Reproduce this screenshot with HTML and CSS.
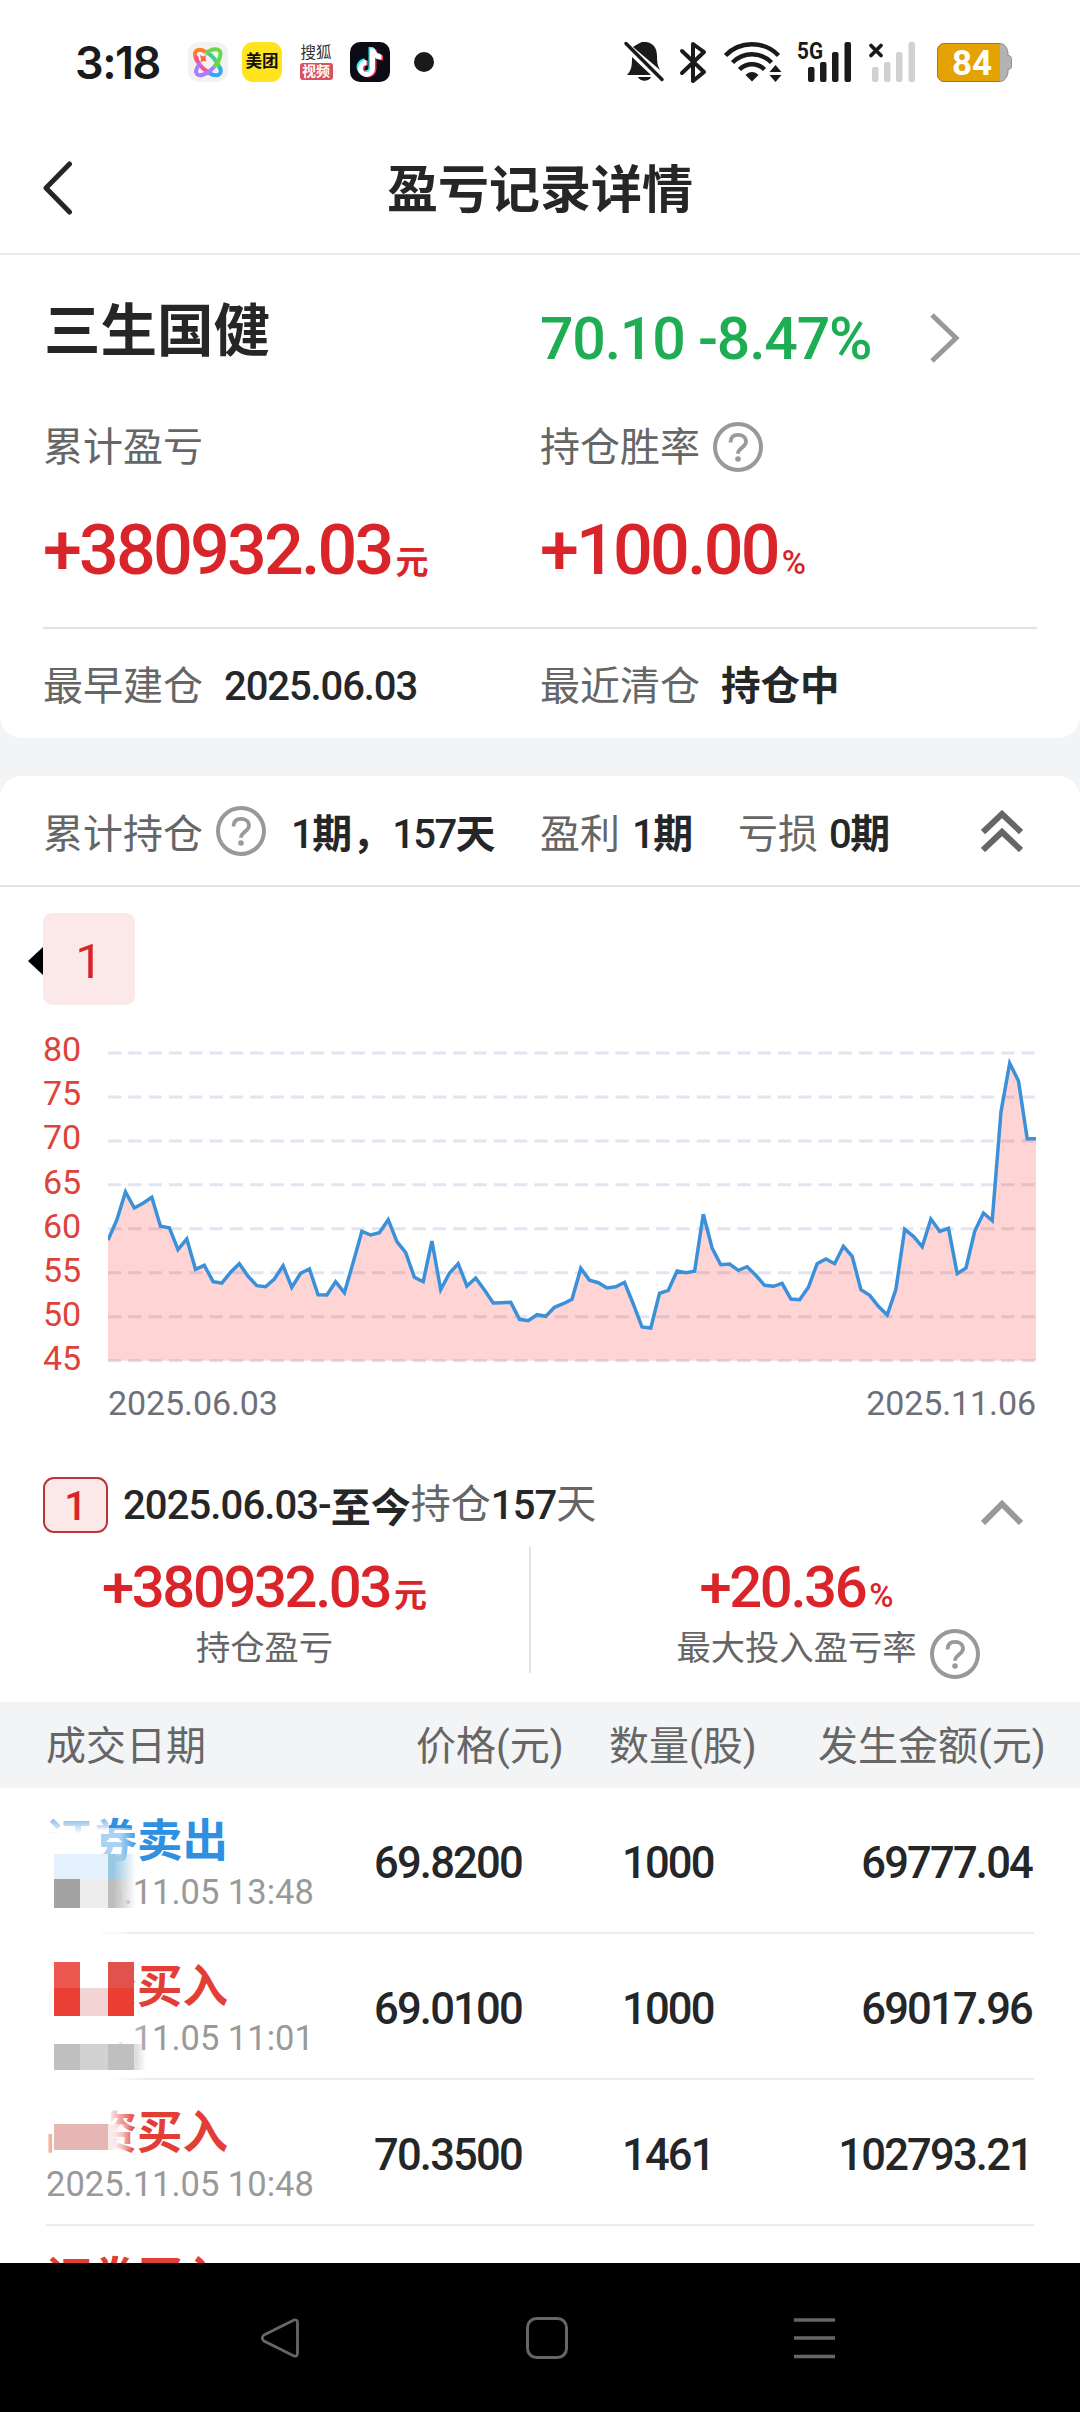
FILE: index.html
```html
<!DOCTYPE html>
<html lang="zh-CN">
<head>
    <meta charset="UTF-8">
    <meta name="viewport" content="width=device-width, initial-scale=1.0">
    <title>盈亏记录详情</title>
    <link rel="stylesheet" href="styles.css">
</head>
<body>
    <!-- 公用图标 -->
    <svg class="defs" width="0" height="0">
        <defs>
            <symbol id="icon-help" viewBox="0 0 50 50">
                <circle cx="25" cy="25" r="23" fill="none" stroke="#999" stroke-width="4"/>
                <path d="M17.5 20.5C17.5 15 20.5 12.8 25 12.8s8 2.600 8 7c0 5.500-8 6-8 12" fill="none" stroke="#999" stroke-width="3.800"/>
                <circle cx="25" cy="37" r="2.800" fill="#999"/>
            </symbol>
            <linearGradient id="fade" x1="0" x2="1" y1="0" y2="0">
                <stop offset="0.650" stop-color="#fff"/>
                <stop offset="1" stop-color="#fff" stop-opacity="0"/>
            </linearGradient>
            <linearGradient id="fade-down" x1="0" x2="0" y1="0" y2="1">
                <stop offset="0" stop-color="#fff" stop-opacity="0.300"/>
                <stop offset="1" stop-color="#fff"/>
            </linearGradient>
            <linearGradient id="fade-blue"><stop offset="0.2" stop-color="#9ac8e2"/><stop offset="1" stop-color="#9ac8e2" stop-opacity="0"/></linearGradient>
            <linearGradient id="fade-gray"><stop offset="0.2" stop-color="#bdbdbd"/><stop offset="1" stop-color="#bdbdbd" stop-opacity="0"/></linearGradient>
            <linearGradient id="fade-pink"><stop offset="0" stop-color="#f9e9e9"/><stop offset="1" stop-color="#fff" stop-opacity="0"/></linearGradient>
        </defs>
    </svg>

    <div class="status-bar">
        <span class="time">3:18</span>
        <div class="apps">
            <svg class="app" viewBox="0 0 40 40">
                <rect width="40" height="40" rx="11" fill="#f2f2f3"/>
                <g fill="none" stroke-width="4">
                    <path d="M9 19C4 9 9 5 18 10" stroke="#ff7a2e"/>
                    <path d="M18 10c7 4 12 11 14 17" stroke="#3fcf8d"/>
                    <path d="M18 11c8-6 17-5 14 4-1 4-3 7-6 10" stroke="#6cd64a"/>
                    <path d="M32 25c3 9-4 10-11 6" stroke="#35a8f5"/>
                    <path d="M22 31C14 27 9 21 8 14" stroke="#f7519a"/>
                    <path d="M26 25c-7 8-17 11-18 5 0-3 2-6 4-9" stroke="#a97bff"/>
                </g>
                <path d="M12 13l3 1.500 3-1.500-.5 3.500 1 3-3-.5-3 1.500.5-3z" fill="#ff6a3c"/>
            </svg>
            <span class="app meituan">美团</span>
            <span class="app sohu"><i>搜狐</i><b>视频</b></span>
            <svg class="app" viewBox="0 0 40 40">
                <rect width="40" height="40" rx="10" fill="#0b0b17"/>
                <g fill="none" stroke-width="5">
                    <path d="M21 5v20a6 6 0 1 1-6-6M21 6c1 5 4 8 9 8" stroke="#25f4ee"/>
                    <path d="M24 8v19a6 6 0 1 1-6-6M24 8c1 5 4 8 9 8" stroke="#fe2c55"/>
                    <path d="M22.500 6.500v20a6 6 0 1 1-6-6M22.500 7c1 5 4 8 9 8" stroke="#fff"/>
                </g>
            </svg>
            <span class="dot"></span>
        </div>
        <svg class="signals" width="395" height="48" viewBox="620 38 395 48">
            <g fill="#1a1a1a">
                <!-- 静音 -->
                <path d="M633 47c3-2 6-4 9-5h4c8 1 11 7 11 14 0 8 1 10 3 14z"/>
                <path d="M632 57l19 18h-24c5-5 5-11 5-18zM638 77h13c-2 5-11 5-13 0z"/>
                <path d="M626 43.500l36 36" stroke="#1a1a1a" stroke-width="3.500" stroke-linecap="round"/>
                <!-- 蓝牙 -->
                <path d="M682 51l22 21-11 9V44l11 8-22 21" fill="none" stroke="#1a1a1a" stroke-width="4" stroke-linejoin="round" stroke-linecap="round"/>
                <!-- wifi -->
                <g fill="none" stroke="#1a1a1a" stroke-width="4.500">
                    <path d="M725.500 55.500c14-15 39-15 53 0"/>
                    <path d="M732.500 62.500c11-11 28-11 39 0"/>
                    <path d="M739.500 69.500c7-7 18-7 25 0"/>
                </g>
                <path d="M745.500 75c4-4 9-4 13 0l-6.500 6.500z"/>
                <path d="M769.500 72l6-7 6 7zM769.500 75h12l-6 7z"/>
                <!-- 卡1 -->
                <rect x="808" y="67" width="6.500" height="15" rx="2"/>
                <rect x="820" y="62" width="6.500" height="20" rx="2"/>
                <rect x="832" y="52" width="6.500" height="30" rx="2"/>
                <rect x="844.500" y="42" width="6.500" height="40" rx="2"/>
                <text x="797" y="58.500" class="net" textLength="26" lengthAdjust="spacingAndGlyphs">5G</text>
                <path d="M871 45.500l10 10M881 45.500l-10 10" stroke="#1a1a1a" stroke-width="3.800" stroke-linecap="round"/>
            </g>
            <!-- 卡2 -->
            <g fill="#d1d1d1">
                <rect x="872" y="67" width="6.500" height="15" rx="2"/>
                <rect x="884" y="62" width="6.500" height="20" rx="2"/>
                <rect x="896" y="52" width="6.500" height="30" rx="2"/>
                <rect x="908.500" y="42" width="6.500" height="40" rx="2"/>
            </g>
            <!-- 电池 -->
            <path d="M945 43.500h54c6 0 8 4 9 9v3c3 0 3.500 2 3.500 4v6c0 2-.5 4-3.500 4v3c-1 5-3 9-9 9h-54c-5 0-7.500-3-7.500-8V51.500c0-5 2.500-8 7.500-8z" fill="#b3b3b3" stroke="#8d8d8d"/>
            <path d="M1000 43.500h-55c-5 0-7.500 3-7.500 8v22c0 5 2.500 8 7.500 8h55z" fill="#e5a203"/>
            <path d="M1000 43.500h-55c-5 0-7.500 3-7.500 8v22c0 5 2.500 8 7.500 8h55" fill="none" stroke="#9b7a2b"/>
            <text x="952" y="74.500" class="level">84</text>
        </svg>
    </div>

    <div class="nav-header">
        <svg class="back" width="30" height="54" viewBox="0 0 30 54">
            <path d="M26.500 3L3 27l23.500 24" fill="none" stroke="#242628" stroke-width="5" stroke-linecap="round" stroke-linejoin="round"/>
        </svg>
        <h1>盈亏记录详情</h1>
    </div>

    <div class="card summary">
        <div class="two-col stock-row">
            <div class="stock-name">三生国健</div>
            <div class="stock-price">
                <span class="num">70.10 -8.47%</span>
                <svg width="30" height="50" viewBox="0 0 30 50"><path d="M2 2l24 23L2 48" fill="none" stroke="#999" stroke-width="5"/></svg>
            </div>
        </div>
        <div class="two-col label-row">
            <div>累计盈亏</div>
            <div class="with-help">持仓胜率<svg class="help"><use href="#icon-help"/></svg></div>
        </div>
        <div class="two-col value-row">
            <div><span class="num">+380932.03</span><small>元</small></div>
            <div><span class="num">+100.00</span><small class="pct">%</small></div>
        </div>
        <div class="two-col date-row">
            <div>最早建仓<span class="num">2025.06.03</span></div>
            <div>最近清仓<b>持仓中</b></div>
        </div>
    </div>

    <div class="card detail">
        <div class="hold-row">
            <span class="g">累计持仓</span>
            <svg class="help"><use href="#icon-help"/></svg>
            <b class="h1"><i>1</i>期，<i>157</i>天</b>
            <span class="g">盈利</span>
            <b class="h2"><i>1</i>期</b>
            <span class="g">亏损</span>
            <b class="h3"><i>0</i>期</b>
            <svg class="fold" width="42" height="42" viewBox="0 0 42 42"><path d="M2 22L21 4l19 18M2 40l19-18 19 18" fill="none" stroke="#666" stroke-width="6"/></svg>
        </div>

        <div class="tabs"><span class="arrow"></span><span class="tab">1</span></div>

        <div class="chart">
            <div class="y-axis">
                <span>80</span><span>75</span><span>70</span><span>65</span>
                <span>60</span><span>55</span><span>50</span><span>45</span>
            </div>
            <div class="plot">
                <svg id="chart" width="928" height="314" viewBox="0 0 928 314"></svg>
                <div class="x-axis"><span>2025.06.03</span><span>2025.11.06</span></div>
            </div>
        </div>

        <div class="period">
            <span class="badge">1</span>
            <span class="num">2025.06.03-</span><b>至今</b><span class="g">持仓</span><span class="num">157</span><span class="g">天</span>
            <svg class="fold" width="42" height="26" viewBox="0 0 42 26"><path d="M2 24L21 5l19 19" fill="none" stroke="#999" stroke-width="6"/></svg>
        </div>

        <div class="stats">
            <div class="stat">
                <div class="stat-value"><span class="num">+380932.03</span><small>元</small></div>
                <div class="stat-label">持仓盈亏</div>
            </div>
            <div class="stat">
                <div class="stat-value"><span class="num">+20.36</span><small class="pct">%</small></div>
                <div class="stat-label">最大投入盈亏率<svg class="help"><use href="#icon-help"/></svg></div>
            </div>
        </div>

        <div class="table-head">
            <span>成交日期</span><span>价格(元)</span><span>数量(股)</span><span>发生金额(元)</span>
        </div>

        <div class="trade">
            <div class="trade-info sell"><p>证券卖出</p><time>2025.11.05 13:48</time></div>
            <span class="num">69.8200</span><span class="num">1000</span><span class="num amount">69777.04</span>
            <svg class="mosaic" width="110" height="146" viewBox="43 0 110 146">
                <rect x="43" y="28" width="66" height="18" fill="url(#fade-down)"/>
                <rect x="43" y="46" width="58" height="100" fill="#fff"/>
                <rect x="85" y="40" width="54" height="104" fill="url(#fade)" opacity="0.600"/>
                <rect x="100" y="80" width="32" height="66" fill="url(#fade)" opacity="0.700"/>
                <rect x="54" y="66" width="54" height="25" fill="#e4f1fc"/>
                <rect x="108" y="66" width="28" height="25" fill="url(#fade-blue)"/>
                <rect x="54" y="91" width="26" height="29" fill="#a2a2a2"/>
                <rect x="80" y="91" width="28" height="29" fill="#ededed"/>
                <rect x="108" y="91" width="28" height="29" fill="url(#fade-gray)"/>
            </svg>
        </div>
        <div class="trade">
            <div class="trade-info buy"><p>融资买入</p><time>2025.11.05 11:01</time></div>
            <span class="num">69.0100</span><span class="num">1000</span><span class="num amount">69017.96</span>
            <svg class="mosaic" width="110" height="146" viewBox="43 0 110 146">
                <rect x="43" y="28" width="88" height="56" fill="#fff"/>
                <rect x="43" y="84" width="106" height="62" fill="url(#fade)"/>
                <rect x="43" y="84" width="92" height="24" fill="#fff"/>
                <rect x="54" y="28" width="26" height="26" fill="#ee5650"/>
                <rect x="108" y="28" width="26" height="26" fill="#e2524d"/>
                <rect x="54" y="54" width="26" height="28" fill="#ea3f35"/>
                <rect x="80" y="54" width="28" height="28" fill="#f2d4d5"/>
                <rect x="108" y="54" width="26" height="28" fill="#ea3e33"/>
                <rect x="54" y="110" width="26" height="26" fill="#bfbfbf"/>
                <rect x="80" y="110" width="28" height="26" fill="#d2d2d2"/>
                <rect x="108" y="110" width="26" height="26" fill="#bfbfbf"/>
                <rect x="134" y="110" width="12" height="26" fill="url(#fade-gray)" opacity="0.500"/>
            </svg>
        </div>
        <div class="trade">
            <div class="trade-info buy"><p>融资买入</p><time>2025.11.05 10:48</time></div>
            <span class="num">70.3500</span><span class="num">1461</span><span class="num amount">102793.21</span>
            <svg class="mosaic" width="110" height="146" viewBox="43 0 110 146">
                <rect x="43" y="26" width="68" height="28" fill="#fff"/>
                <rect x="43" y="54" width="11" height="22" fill="#fff" opacity="0.600"/>
                <rect x="52" y="26" width="84" height="52" fill="url(#fade)"/>
                <rect x="54" y="44" width="54" height="26" fill="#e6b6b5"/>
                <rect x="108" y="44" width="24" height="26" fill="url(#fade-pink)"/>
            </svg>
        </div>
        <div class="trade">
            <div class="trade-info buy"><p>证券买入</p></div>
        </div>
    </div>

    <div class="sys-nav">
        <svg width="40" height="42" viewBox="0 0 40 42"><path d="M34 3L4 18q-3.500 3 0 6l30 15q3.500 1 3.500-3V6q0-4-3.500-3z" fill="none" stroke="#666" stroke-width="2.800"/></svg>
        <svg width="42" height="42" viewBox="0 0 42 42"><rect x="1.500" y="1.500" width="39" height="39" rx="9" fill="none" stroke="#666" stroke-width="3"/></svg>
        <svg width="42" height="42" viewBox="0 0 42 42"><path d="M0 3h41M0 21h41M0 39.500h41" stroke="#666" stroke-width="3.500"/></svg>
    </div>

    <script>
        // 走势点，距 80 刻度线的距离
        const points = [
            561, 501, 417, 465, 451, 433, 520, 524, 590, 558, 649, 637, 686, 690, 658, 632, 670, 698, 701, 678,
            638, 703, 661, 648, 725, 726, 686, 719, 629, 535, 546, 539, 500, 566, 599, 673, 686, 564, 710, 661,
            632, 699, 675, 711, 750, 749, 748, 799, 803, 785, 790, 763, 752, 739, 646, 682, 689, 705, 701, 688,
            753, 822, 825, 721, 712, 654, 659, 655, 484, 585, 635, 633, 652, 641, 667, 697, 700, 691, 738, 740,
            703, 632, 618, 632, 580, 610, 710, 727, 760, 786, 709, 529, 550, 581, 498, 535, 526, 662, 645, 535,
            480, 503, 176, 31, 84, 257, 257
        ];
        const top0 = 3;
        const width = 928;
        const height = 307.7;
        const step = width / (points.length - 1);
        const line = points.map((p, i) => (i * step).toFixed(1) + ',' + (top0 + p / 3).toFixed(1)).join(' ');

        let html = '';
        for (let i = 0; i < 8; i++) {
            const y = top0 + height / 7 * i;
            html += `<line class="grid" x1="0" x2="${width}" y1="${y}" y2="${y}"/>`;
        }
        html += `<polygon class="area" points="0,${top0 + height} ${line} ${width},${top0 + height}"/>`;
        html += `<polyline class="line" points="${line}"/>`;
        document.getElementById('chart').innerHTML = html;
    </script>
</body>
</html>
```
FILE: styles.css
```css
* {
    box-sizing: border-box;
}
body {
    margin: 0;
    width: 1080px;
    height: 2412px;
    overflow: hidden;
    background: #f2f4f6;
    color: #242628;
    font-family: Roboto, "Noto Sans CJK SC", sans-serif;
    font-size: 40px;
    display: flex;
    flex-direction: column;
}
svg {
    display: block;
    flex: none;
}
i {
    font-style: normal;
}
.defs {
    position: absolute;
}
.num {
    font-weight: 500;
    white-space: nowrap;
}
.help {
    width: 50px;
    height: 50px;
}

/* 状态栏 */
.status-bar {
    height: 124px;
    flex: none;
    background: #fff;
    display: flex;
    align-items: center;
    padding: 0 65px 0 75px;
}
.time {
    width: 113px;
    font-family: Inter, Roboto, sans-serif;
    font-size: 45px;
    font-weight: 600;
    letter-spacing: -1.500px;
    color: #1a1a1a;
}
.apps {
    display: flex;
    align-items: center;
    gap: 14px;
}
.app {
    width: 40px;
    height: 40px;
}
.meituan {
    border-radius: 11px;
    background: #ffe31f;
    color: #111;
    font-size: 16.500px;
    font-weight: 700;
    line-height: 40px;
    text-align: center;
}
.sohu {
    display: flex;
    flex-direction: column;
    align-items: center;
    padding-top: 3px;
    font-size: 15.500px;
    line-height: 17px;
    color: #333;
}
.sohu b {
    margin-top: 1px;
    width: 33px;
    border-radius: 3px;
    background: #d9505e;
    color: #fff;
    font-size: 14px;
    line-height: 17px;
    text-align: center;
}
.dot {
    width: 20px;
    height: 20px;
    margin-left: 10px;
    border-radius: 50%;
    background: #1a1a1a;
}
.signals {
    margin-left: auto;
    overflow: visible;
}
.net {
    font-size: 24px;
    font-weight: 700;
}
.level {
    fill: #fff;
    font-size: 35px;
    font-weight: 700;
}

/* 标题栏 */
.nav-header {
    height: 131px;
    flex: none;
    display: flex;
    align-items: center;
    padding: 0 43px 3px;
    background: #fff;
    border-bottom: 2px solid #ececec;
}
.nav-header .back {
    margin-top: 2px;
}
.nav-header h1 {
    flex: 1;
    margin: 0 30px 2px 0;
    text-align: center;
    font-size: 51px;
    font-weight: 700;
}

/* 汇总 */
.card {
    flex: none;
    background: #fff;
}
.summary {
    height: 483px;
    padding: 0 43px;
    border-radius: 0 0 22px 22px;
}
.two-col {
    display: grid;
    grid-template-columns: 1fr 1fr;
    align-items: center;
}
.stock-row {
    height: 150px;
}
.stock-name {
    padding: 0 0 8px 1px;
    font-size: 56.500px;
    font-weight: 700;
}
.stock-price {
    display: flex;
    align-items: center;
    padding-top: 16px;
    color: #1fad53;
    font-size: 59px;
}
.stock-price .num {
    width: 390px;
    letter-spacing: -1.200px;
}
.label-row {
    height: 80px;
    padding-bottom: 2px;
    color: #666;
}
.with-help {
    display: flex;
    align-items: center;
    gap: 13px;
}
.with-help .help {
    margin-top: 6px;
}
.value-row {
    height: 144px;
    padding-bottom: 13px;
    border-bottom: 2px solid #e2e2e2;
    color: #d9252a;
}
.value-row .num {
    font-size: 70px;
    letter-spacing: -2.800px;
}
small {
    margin-left: 4px;
    font-size: 33px;
    font-weight: 700;
}
small.pct {
    font-weight: 500;
}
.date-row {
    height: 107px;
    color: #666;
}
.date-row .num {
    margin-left: 21px;
    letter-spacing: -1.100px;
    color: #242628;
}
.date-row b {
    margin-left: 21px;
    font-size: 39.500px;
    color: #242628;
}

/* 持仓明细 */
.detail {
    flex: 1;
    min-height: 0;
    margin-top: 38px;
    overflow: hidden;
    border-radius: 22px 22px 0 0;
}
.hold-row {
    height: 111px;
    display: flex;
    align-items: center;
    padding: 0 57px 0 43px;
    border-bottom: 2px solid #e2e4e4;
    white-space: nowrap;
}
.hold-row .help {
    margin: 0 25px 0 13px;
}
.hold-row i {
    font-weight: 500;
    letter-spacing: -1.600px;
}
.g {
    color: #666;
}
.h1 {
    width: 249px;
}
.h2 {
    width: 118px;
    padding-left: 12px;
}
.h3 {
    padding-left: 11px;
}
.fold {
    margin-left: auto;
}
.tabs {
    display: flex;
    align-items: center;
    margin: 26px 0 0 28px;
}
.arrow {
    margin-top: 4px;
    border: 14px solid transparent;
    border-left: 0;
    border-right: 15px solid #000;
}
.tab {
    width: 92px;
    height: 92px;
    border-radius: 9px;
    background: #fbe8e9;
    color: #d9252a;
    font-size: 49px;
    line-height: 97px;
    text-align: center;
}
.chart {
    display: flex;
    margin-top: 22px;
    padding-left: 43px;
}
.y-axis {
    width: 65px;
    display: flex;
    flex-direction: column;
    font-size: 34px;
    line-height: 44.200px;
    color: #dd4338;
}
.plot {
    width: 928px;
    padding-top: 23px;
}
.grid {
    stroke: #e0e6f1;
    stroke-width: 3;
    stroke-dasharray: 13.300 7;
}
.area {
    fill: #ff0000;
    fill-opacity: 0.170;
}
.line {
    fill: none;
    stroke: #3a90d9;
    stroke-width: 3.500;
}
.x-axis {
    display: flex;
    justify-content: space-between;
    margin-top: 19px;
    font-size: 34px;
    letter-spacing: -0.100px;
    line-height: 40px;
    color: #6e7079;
}
.period {
    height: 56px;
    display: flex;
    align-items: center;
    margin-top: 54px;
    padding: 0 57px 0 43px;
    white-space: nowrap;
}
.badge {
    width: 65px;
    height: 56px;
    margin-right: 15px;
    border: 2px solid #b9353a;
    border-radius: 11px;
    background: #fbe8e9;
    color: #d9252a;
    font-weight: 500;
    line-height: 55px;
    text-align: center;
}
.period .num {
    letter-spacing: -0.900px;
}
.period .g {
    padding-bottom: 8px;
}
.period .fold {
    margin-top: 14px;
}
.stats {
    display: flex;
    height: 126px;
    margin-top: 14px;
}
.stat {
    width: 531px;
    text-align: center;
}
.stat:first-child {
    border-right: 2px solid #e2e2e2;
}
.stat-value {
    color: #d9252a;
    line-height: 80px;
    height: 79px;
}
.stat-value .num {
    font-size: 58px;
    letter-spacing: -2.400px;
}
.stat-label {
    display: flex;
    justify-content: center;
    font-size: 34.300px;
    line-height: 44px;
    color: #666;
}
.stat-label .help {
    margin: 3px -63px 0 13px;
}
.table-head {
    display: grid;
    grid-template-columns: 370px 193px 209px auto;
    align-items: center;
    height: 86px;
    margin-top: 29px;
    padding: 0 0 4px 46px;
    background: #f2f4f6;
    color: #666;
    white-space: nowrap;
}
.trade {
    position: relative;
    display: grid;
    grid-template-columns: 328px 248px 130px 1fr;
    align-items: center;
    height: 146px;
    margin: 0 46px;
    border-bottom: 2px solid #ececec;
}
.trade .num {
    padding-top: 6px;
    font-size: 43.500px;
    letter-spacing: -1.800px;
}
.trade .amount {
    padding-right: 2px;
    text-align: right;
}
.trade-info {
    align-self: start;
    padding-top: 24px;
}
.trade-info p {
    margin: 0;
    font-size: 45.500px;
    font-weight: 700;
    line-height: 60px;
}
.trade-info time {
    display: block;
    font-size: 34.500px;
    line-height: 40px;
    color: #999;
}
.sell p {
    color: #2f8fe0;
}
.buy p {
    color: #e23e35;
}
.mosaic {
    position: absolute;
    left: -3px;
    top: 0;
}

/* 系统导航键 */
.sys-nav {
    height: 149px;
    flex: none;
    display: flex;
    justify-content: space-between;
    align-items: center;
    padding: 0 244px 0 260px;
    background: #000;
}
```
